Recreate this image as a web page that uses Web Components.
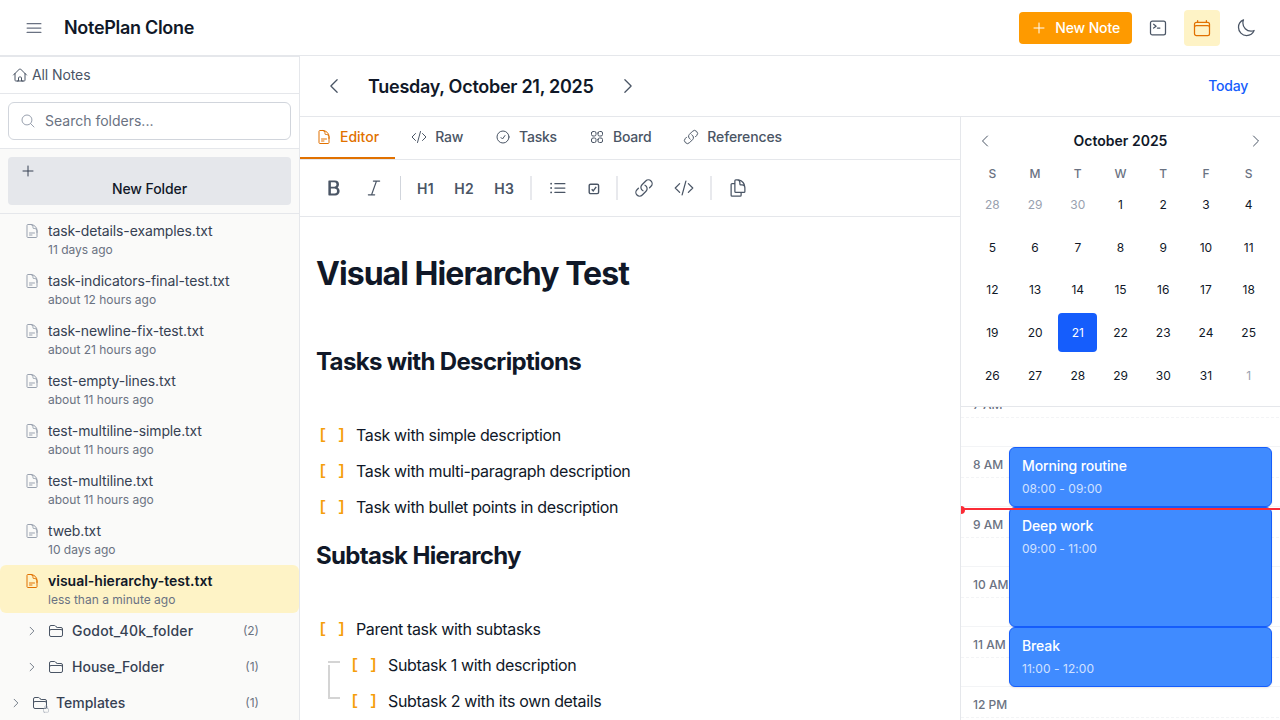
<!DOCTYPE html>
<html lang="en">
<head>
<meta charset="utf-8">
<title>NotePlan Clone</title>
<style>
html,body{margin:0;height:100%;overflow:hidden;background:#fff}
body{font-family:Inter,"Liberation Sans",sans-serif;font-size:14px;line-height:20px;color:#101828}
</style>
</head>
<body>
<np-app></np-app>
<script>
const ICONS={
bars:'M3.75 6.75h16.5M3.75 12h16.5m-16.5 5.25h16.5',
plus:'M12 4.5v15m7.5-7.5h-15',
home:'m2.25 12 8.954-8.955c.44-.439 1.152-.439 1.591 0L21.75 12M4.5 9.75v10.125c0 .621.504 1.125 1.125 1.125H9.75v-4.875c0-.621.504-1.125 1.125-1.125h2.25c.621 0 1.125.504 1.125 1.125V21h4.125c.621 0 1.125-.504 1.125-1.125V9.75M8.25 21h8.25',
search:'m21 21-5.197-5.197m0 0A7.5 7.5 0 1 0 5.196 5.196a7.5 7.5 0 0 0 10.607 10.607Z',
doc:'M19.5 14.25v-2.625a3.375 3.375 0 0 0-3.375-3.375h-1.5A1.125 1.125 0 0 1 13.5 7.125v-1.5a3.375 3.375 0 0 0-3.375-3.375H8.25m0 12.75h7.5m-7.5 3H12M10.5 2.25H5.625c-.621 0-1.125.504-1.125 1.125v17.25c0 .621.504 1.125 1.125 1.125h12.75c.621 0 1.125-.504 1.125-1.125V11.25a9 9 0 0 0-9-9Z',
folder:'M2.25 12.75V12A2.25 2.25 0 0 1 4.5 9.75h15A2.25 2.25 0 0 1 21.75 12v.75m-8.69-6.44-2.12-2.12a1.5 1.5 0 0 0-1.061-.44H4.5A2.25 2.25 0 0 0 2.25 6v12a2.25 2.25 0 0 0 2.25 2.25h15A2.25 2.25 0 0 0 21.75 18V9a2.25 2.25 0 0 0-2.25-2.25h-5.379a1.5 1.5 0 0 1-1.06-.44Z',
right:'m8.25 4.5 7.5 7.5-7.5 7.5',
left:'M15.75 19.5 8.25 12l7.5-7.5',
terminal:'m6.75 7.5 3 2.25-3 2.25m4.5 0h3m-9 8.25h13.5A2.25 2.25 0 0 0 21 18V6a2.25 2.25 0 0 0-2.25-2.25H5.25A2.25 2.25 0 0 0 3 6v12a2.25 2.25 0 0 0 2.25 2.25Z',
calendar:'M6.75 3v2.25M17.25 3v2.25M3 18.75V7.5a2.25 2.25 0 0 1 2.25-2.25h13.5A2.25 2.25 0 0 1 21 7.5v11.25m-18 0A2.25 2.25 0 0 0 5.25 21h13.5A2.25 2.25 0 0 0 21 18.75m-18 0v-7.5A2.25 2.25 0 0 1 5.25 9h13.5A2.25 2.25 0 0 1 21 11.25v7.5',
moon:'M21.752 15.002A9.72 9.72 0 0 1 18 15.75c-5.385 0-9.75-4.365-9.75-9.75 0-1.33.266-2.597.748-3.752A9.753 9.753 0 0 0 3 11.25C3 16.635 7.365 21 12.75 21a9.753 9.753 0 0 0 9.002-5.998Z',
code:'M17.25 6.75 22.5 12l-5.25 5.25m-10.5 0L1.5 12l5.25-5.25m7.5-3-4.5 16.5',
check:'M9 12.75 11.25 15 15 9.75M21 12a9 9 0 1 1-18 0 9 9 0 0 1 18 0Z',
squares:'M3.75 6A2.25 2.25 0 0 1 6 3.75h2.25A2.25 2.25 0 0 1 10.5 6v2.25a2.25 2.25 0 0 1-2.25 2.25H6a2.25 2.25 0 0 1-2.25-2.25V6ZM3.75 15.75A2.25 2.25 0 0 1 6 13.5h2.25a2.25 2.25 0 0 1 2.25 2.25V18a2.25 2.25 0 0 1-2.25 2.25H6A2.25 2.25 0 0 1 3.75 18v-2.25ZM13.5 6a2.25 2.25 0 0 1 2.25-2.25H18A2.25 2.25 0 0 1 20.25 6v2.25A2.25 2.25 0 0 1 18 10.5h-2.25a2.25 2.25 0 0 1-2.25-2.25V6ZM13.5 15.75a2.25 2.25 0 0 1 2.25-2.25H18a2.25 2.25 0 0 1 2.25 2.25V18A2.25 2.25 0 0 1 18 20.25h-2.25A2.25 2.25 0 0 1 13.5 18v-2.25Z',
link:'M13.19 8.688a4.5 4.5 0 0 1 1.242 7.244l-4.5 4.5a4.5 4.5 0 0 1-6.364-6.364l1.757-1.757m13.35-.622 1.757-1.757a4.5 4.5 0 0 0-6.364-6.364l-4.5 4.5a4.5 4.5 0 0 0 1.242 7.244',
list:'M8.25 6.75h12M8.25 12h12m-12 5.25h12M3.75 6.75h.007v.008H3.75V6.75Zm.375 0a.375.375 0 1 1-.75 0 .375.375 0 0 1 .75 0ZM3.75 12h.007v.008H3.75V12Zm.375 0a.375.375 0 1 1-.75 0 .375.375 0 0 1 .75 0Zm-.375 5.25h.007v.008H3.75v-.008Zm.375 0a.375.375 0 1 1-.75 0 .375.375 0 0 1 .75 0Z',
copy:'M15.75 17.25v3.375c0 .621-.504 1.125-1.125 1.125h-9.75a1.125 1.125 0 0 1-1.125-1.125V7.875c0-.621.504-1.125 1.125-1.125H6.75a9.06 9.06 0 0 1 1.5.124m7.5 10.376h3.375c.621 0 1.125-.504 1.125-1.125V11.25c0-4.46-3.243-8.161-7.5-8.876a9.06 9.06 0 0 0-1.5-.124H9.375c-.621 0-1.125.504-1.125 1.125v3.5m7.5 10.375H9.375a1.125 1.125 0 0 1-1.125-1.125v-9.25m12 6.625v-1.875a3.375 3.375 0 0 0-3.375-3.375h-1.5a1.125 1.125 0 0 1-1.125-1.125v-1.5a3.375 3.375 0 0 0-3.375-3.375H9.75',
bold:'M6.75 3.744h-.753v8.25h7.125a4.125 4.125 0 0 0 0-8.25H6.75Zm0 0v.38m0 16.122h6.747a4.5 4.5 0 0 0 0-9.001h-7.5v9h.753Zm0 0v-.37m0-15.751h6a3.75 3.75 0 1 1 0 7.5h-6m0-7.5v7.5m0 0v8.25m0-8.25h6.375a4.125 4.125 0 0 1 0 8.25H6.75m.747-15.38h4.875a3.375 3.375 0 0 1 0 6.75H7.497v-6.75Zm0 7.5h5.25a3.75 3.75 0 0 1 0 7.5h-5.25v-7.5Z',
italic:'M5.248 20.246H9.05m0 0h3.696m-3.696 0 5.893-16.502m0 0h-3.697m3.697 0h3.803',
lock:'M16.5 10.5V6.75a4.5 4.5 0 1 0-9 0v3.75m-.75 11.25h10.5a2.25 2.25 0 0 0 2.25-2.25v-6.75a2.25 2.25 0 0 0-2.25-2.25H6.75a2.25 2.25 0 0 0-2.25 2.25v6.75a2.25 2.25 0 0 0 2.25 2.25Z'
};
function define(name,render){
  customElements.define(name,class extends HTMLElement{
    constructor(){super();this.attachShadow({mode:'open'});}
    connectedCallback(){
      const t=document.createElement('template');
      t.innerHTML=render(this);
      this.shadowRoot.replaceChildren(t.content.cloneNode(true));
    }
  });
}
const attr=(el,n,d='')=>el.getAttribute(n)??d;

define('np-icon',el=>{const s=attr(el,'size','20');return `
<style>:host{display:block;flex:none;width:${s}px;height:${s}px}svg{display:block}</style>
<svg width="${s}" height="${s}" viewBox="0 0 24 24" fill="none" stroke="currentColor" stroke-width="1.5" stroke-linecap="round" stroke-linejoin="round"><path d="${ICONS[attr(el,'name')]}"/></svg>`});

define('np-icon-button',el=>`
<style>:host{display:flex;flex:none;align-items:center;justify-content:center;width:36px;height:36px;border-radius:4px;color:#4a5565}
:host([active]){background:#fef3c6;color:#e17100}
:host([small]){width:24px;height:24px;color:#4a5565}
:host([muted]){color:#6a7282}</style>
<np-icon name="${attr(el,'icon')}" size="${el.hasAttribute('small')?16:20}"></np-icon>`);

define('np-header',()=>`
<style>:host{display:flex;align-items:center;height:55px;flex:none;padding:0 16px;border-bottom:1px solid #e5e7eb;background:#fff}
h1{font-size:18px;line-height:28px;font-weight:600;letter-spacing:-.3px;margin:0 auto 0 12px}
.new{display:flex;align-items:center;gap:8px;height:32px;padding:0 12px;border-radius:4px;background:#fe9a00;color:#fff;font-weight:500;letter-spacing:-.14px}
.actions{display:flex;align-items:center;gap:8px}</style>
<np-icon-button icon="bars" muted></np-icon-button><h1>NotePlan Clone</h1>
<div class="actions"><div class="new"><np-icon name="plus" size="16"></np-icon><span>New Note</span></div>
<np-icon-button icon="terminal"></np-icon-button><np-icon-button icon="calendar" active></np-icon-button><np-icon-button icon="moon"></np-icon-button></div>`);

define('np-file',el=>`
<style>:host{display:flex;box-sizing:border-box;height:48px;margin-bottom:2px;padding:6px 8px 6px 24px;gap:8px;border-radius:6px;color:#364153;letter-spacing:-.12px}
:host([active]){background:#fef3c6;color:#101828;font-weight:600;letter-spacing:0}
np-icon{margin-top:2px;color:#99a1af}:host([active]) np-icon{color:#e17100}
small{display:block;font-size:12px;line-height:16px;font-weight:400;letter-spacing:0;color:#6a7282;margin-top:1px}</style>
<np-icon name="doc" size="16"></np-icon><div><slot></slot><small>${attr(el,'when')}</small></div>`);

define('np-folder',el=>`
<style>:host{display:flex;align-items:center;height:36px;padding:0 40px 0 ${attr(el,'indent','24')}px;color:#364153;font-weight:500}
.chev{color:#4a5565;width:16px;display:flex;justify-content:center}
.ico{position:relative;margin:0 8px;color:#4a5565}
.lock{position:absolute;right:-2px;bottom:-2px;color:#99a1af}
.count{margin-left:auto;font-size:12px;font-weight:400;color:#6a7282;letter-spacing:0}</style>
<span class="chev"><np-icon name="right" size="12"></np-icon></span>
<span class="ico"><np-icon name="folder" size="16"></np-icon>${el.hasAttribute('locked')?'<np-icon class="lock" name="lock" size="8"></np-icon>':''}</span>
<slot></slot><span class="count">(${attr(el,'count')})</span>`);

define('np-sidebar',()=>`
<style>:host{display:flex;flex-direction:column;box-sizing:border-box;width:300px;flex:none;border-top:1px solid #e5e7eb;border-right:1px solid #e5e7eb;background:#fafaf9;overflow:hidden}
.all{display:flex;align-items:center;gap:4px;height:36px;padding-left:12px;background:#fff;border-bottom:1px solid #e5e7eb;color:#4a5565;letter-spacing:-.1px}
.search{padding:8px;background:#fff;border-bottom:1px solid #e5e7eb}
.field{display:flex;align-items:center;gap:9px;box-sizing:border-box;height:38px;padding-left:11px;border:1px solid #d1d5dc;border-radius:6px;color:#6a7282}
.field np-icon{color:#99a1af}
.new{padding:8px;border-bottom:1px solid #e5e7eb}
.btn{box-sizing:border-box;height:48px;padding:6px 12px;border-radius:4px;background:#e5e7eb;text-align:center;font-weight:500;letter-spacing:-.08px}
.btn np-icon{color:#364153}
.tree{flex:1;min-height:0;overflow:hidden;padding-top:1px}
np-file[active]{margin-bottom:0}
.wide{letter-spacing:.19px}</style>
<div class="all"><np-icon name="home" size="16"></np-icon>All Notes</div>
<div class="search"><div class="field"><np-icon name="search" size="16"></np-icon>Search folders...</div></div>
<div class="new"><div class="btn"><np-icon name="plus" size="16"></np-icon>New Folder</div></div>
<div class="tree">
<np-file when="11 days ago">task-details-examples.txt</np-file>
<np-file when="about 12 hours ago">task-indicators-final-test.txt</np-file>
<np-file when="about 21 hours ago">task-newline-fix-test.txt</np-file>
<np-file when="about 11 hours ago">test-empty-lines.txt</np-file>
<np-file when="about 11 hours ago">test-multiline-simple.txt</np-file>
<np-file when="about 11 hours ago">test-multiline.txt</np-file>
<np-file when="10 days ago">tweb.txt</np-file>
<np-file active when="less than a minute ago">visual-hierarchy-test.txt</np-file>
<np-folder class="wide" count="2">Godot_40k_folder</np-folder>
<np-folder count="1">House_Folder</np-folder>
<np-folder indent="8" count="1" locked>Templates</np-folder>
</div>`);

define('np-datebar',()=>`
<style>:host{display:flex;align-items:center;gap:16px;height:60px;flex:none;padding:0 32px 0 16px;border-bottom:1px solid #e5e7eb}
h2{margin:1px 0 0;font-size:18px;line-height:28px;font-weight:600;letter-spacing:-.28px}.today{margin-left:auto;color:#155dfc;font-weight:500;letter-spacing:-.25px}</style>
<np-icon-button icon="left"></np-icon-button><h2>Tuesday, October 21, 2025</h2><np-icon-button icon="right"></np-icon-button><span class="today">Today</span>`);

define('np-tab',el=>`
<style>:host{display:flex;align-items:center;gap:8px;padding:10px 16px;border-bottom:2px solid transparent;color:#4a5565;font-weight:500;letter-spacing:-.22px}
:host([active]){color:#e17100;border-color:#e17100;letter-spacing:0}
:host([icon=link]){letter-spacing:-.13px}</style>
<np-icon name="${attr(el,'icon')}" size="16"></np-icon><slot></slot>`);

define('np-toolbar',()=>`
<style>:host{display:flex;align-items:center;gap:4px;height:56px;padding:0 16px;border-bottom:1px solid #e5e7eb;color:#4a5565;font-weight:600}
i{width:1px;height:24px;margin:0 4px;background:#d1d5dc}
i.soft{width:2px;background:#e8e9ed}
span{padding:9px 8px 7px;letter-spacing:.4px}</style>
<np-icon-button icon="bold"></np-icon-button><np-icon-button icon="italic"></np-icon-button><i></i>
<span>H1</span><span>H2</span><span>H3</span><i class="soft"></i>
<np-icon-button icon="list"></np-icon-button><np-icon-check></np-icon-check><i class="soft"></i>
<np-icon-button icon="link"></np-icon-button><np-icon-button icon="code"></np-icon-button><i class="soft"></i>
<np-icon-button icon="copy"></np-icon-button>`);

define('np-icon-check',()=>`
<style>:host{display:block;padding:0 8px;height:12px}svg{display:block;margin-top:1px}</style>
<svg width="12" height="12" viewBox="0 0 12 12" fill="none" stroke="currentColor" stroke-width="1.4"><rect x="1.2" y="1.2" width="9.4" height="9.4" rx="1.4"/><path d="M3.7 6.2 5.2 7.8 8.2 3.8"/></svg>`);

define('np-task',()=>`
<style>:host{display:flex;align-items:center;height:36px;font-size:16px;line-height:24px;letter-spacing:-.35px}
b{width:32px;margin-right:8px;text-align:center;white-space:pre;font-family:"Liberation Mono",monospace;font-size:14px;letter-spacing:.9px;text-indent:1px;font-weight:700;color:#f59e0b}</style>
<b>[ ]</b><slot></slot>`);

define('np-editor',()=>`
<style>:host{display:flex;flex-direction:column;flex:1;min-height:0;overflow:hidden;padding:0 16px}
h1{margin:37px 0 0;font-size:32px;line-height:40px;font-weight:700;letter-spacing:-.95px}
h2{margin:51px 0 38px;font-size:24px;line-height:34px;font-weight:700;letter-spacing:-.66px}
h2.next{margin:14px 0 38px}
.subs{position:relative;padding-left:32px}
.rail{position:absolute;left:12px;top:14px;width:12px;height:38px}
.rail svg{display:block}</style>
<h1>Visual Hierarchy Test</h1>
<h2>Tasks with Descriptions</h2>
<np-task>Task with simple description</np-task>
<np-task>Task with multi-paragraph description</np-task>
<np-task>Task with bullet points in description</np-task>
<h2 class="next">Subtask Hierarchy</h2>
<np-task>Parent task with subtasks</np-task>
<div class="subs"><div class="rail"><svg width="12" height="38" fill="#d4d4d4"><path d="M0 0h12v2H0zM0 4h2v32h10v2H0z"/></svg></div>
<np-task>Subtask 1 with description</np-task><np-task>Subtask 2 with its own details</np-task></div>`);

define('np-calendar',()=>{
  const days=[28,29,30,...Array.from({length:31},(_,i)=>i+1),1];
  return `
<style>:host{display:block;flex:none;box-sizing:border-box;height:290px;padding:12px;border-bottom:1px solid #e5e7eb}
.head{display:flex;align-items:center;justify-content:space-between;font-weight:600;margin-bottom:8px}
.grid{display:grid;grid-template-columns:repeat(7,1fr);column-gap:4px;text-align:center;font-size:12px;line-height:16px}
.names{color:#6a7282;font-weight:500;padding:5px 0 3px}
.days{row-gap:4px}
.days span{display:flex;align-items:center;justify-content:center;aspect-ratio:1;border-radius:4px;line-height:17px}
.out{color:#99a1af}.sel{background:#155dfc;color:#fff}</style>
<div class="head"><np-icon-button small icon="left"></np-icon-button><span>October 2025</span><np-icon-button small icon="right"></np-icon-button></div>
<div class="grid names">${[...'SMTWTFS'].map(d=>`<span>${d}</span>`).join('')}</div>
<div class="grid days">${days.map((d,i)=>`<span class="${i<3||i>33?'out':d===21?'sel':''}">${d}</span>`).join('')}</div>`});

define('np-event',el=>`
<style>:host{position:absolute;left:48px;right:8px;top:${attr(el,'start')}px;height:${attr(el,'span')}px;box-sizing:border-box;padding:8px 12px;border:1px solid #155dfc;border-radius:6px;background:#408bff;color:#fff;font-weight:500;letter-spacing:-.12px;box-shadow:0 1px 2px #0000001a}
small{display:block;margin-top:5px;font-size:12px;line-height:16px;font-weight:400;letter-spacing:.05px;opacity:.75}</style>
<slot></slot><small>${attr(el,'time')}</small>`);

define('np-timeline',()=>`
<style>:host{display:block;position:relative;flex:1;min-height:0;overflow:hidden}
.hours{position:relative;margin-top:-20px}
.hour{box-sizing:border-box;height:60px;border-bottom:1px solid #f3f4f6;padding:10px 0 0 12px;font-size:12px;line-height:16px;font-weight:500;color:#6a7282;background:repeating-linear-gradient(90deg,#f3f4f6 0 3px,transparent 3px 5px) 0 30px/100% 1px no-repeat}
.now{position:absolute;left:0;right:0;top:121px;height:2px;background:#fb2c36}
.now::before{content:"";position:absolute;left:-4px;top:-2px;width:8px;height:8px;border-radius:50%;background:#fb2c36}</style>
<div class="hours">${['7 AM','8 AM','9 AM','10 AM','11 AM','12 PM'].map(h=>`<div class="hour">${h}</div>`).join('')}
<np-event start="60" span="60" time="08:00 - 09:00">Morning routine</np-event>
<np-event start="120" span="120" time="09:00 - 11:00">Deep work</np-event>
<np-event start="240" span="60" time="11:00 - 12:00">Break</np-event>
<div class="now"></div></div>`);

define('np-app',()=>`
<style>:host{display:flex;flex-direction:column;height:100vh;overflow:hidden}
.body,.split{display:flex;flex:1;min-height:0}
.main{display:flex;flex-direction:column;flex:1;min-width:0}
.doc{display:flex;flex-direction:column;flex:1;min-width:0}
.tabs{display:flex;border-bottom:1px solid #e5e7eb}
.side{display:flex;flex-direction:column;box-sizing:border-box;width:320px;flex:none;border-left:1px solid #e5e7eb}</style>
<np-header></np-header>
<div class="body"><np-sidebar></np-sidebar><div class="main"><np-datebar></np-datebar>
<div class="split"><div class="doc"><div class="tabs"><np-tab active icon="doc">Editor</np-tab><np-tab icon="code">Raw</np-tab><np-tab icon="check">Tasks</np-tab><np-tab icon="squares">Board</np-tab><np-tab icon="link">References</np-tab></div>
<np-toolbar></np-toolbar><np-editor></np-editor></div>
<div class="side"><np-calendar></np-calendar><np-timeline></np-timeline></div></div></div></div>`);
</script>
</body>
</html>
